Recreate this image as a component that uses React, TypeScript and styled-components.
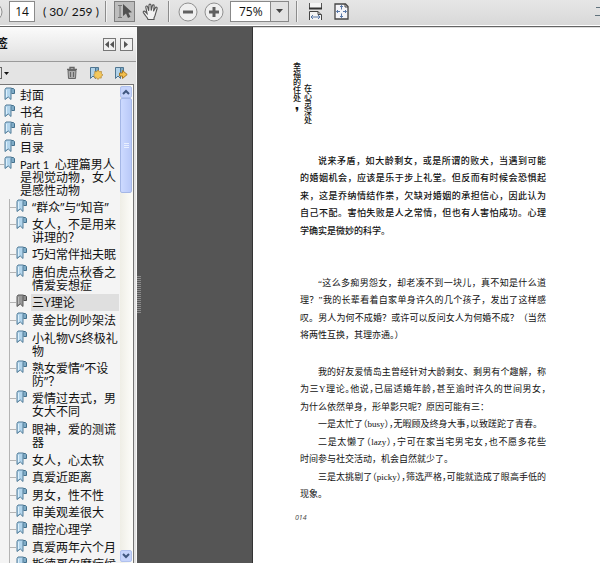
import React from "react";
import styled, { createGlobalStyle, css } from "styled-components";

const GlobalStyle = createGlobalStyle`
  * { box-sizing: border-box; }
  body { margin: 0; overflow: hidden; }
  button, input, select { font: inherit; color: inherit; margin: 0; padding: 0; border: 0; background: none; border-radius: 0; }
  ul { list-style: none; margin: 0; padding: 0; }
  p { margin: 0; }
  svg { display: block; flex: none; }
`;

const Shell = styled.div`
  display: flex;
  flex-direction: column;
  height: 100vh;
  background: #fff;
  color: #111;
  font-family: "Open Sans", "Noto Sans CJK SC", sans-serif;
  font-size: 12px;
`;

const Toolbar = styled.header`
  display: flex;
  align-items: flex-start;
  flex: none;
  height: 27px;
  overflow: hidden;
  background: linear-gradient(#e6e6e6, #d8d8d8);
  border-bottom: 1px solid #646464;
  box-shadow: inset 0 -1px #fff;
`;

const ToolButton = styled.button<{ $active?: boolean; $gap?: number }>`
  display: grid;
  place-items: center;
  flex: none;
  width: 21px;
  height: 21px;
  margin: 1px 0 0 ${(p) => p.$gap ?? 0}px;
  ${(p) =>
    p.$active &&
    css`
      background: #bdbdbd;
      border: 1px solid #7e7e7e;
    `}
`;

const EdgeButton = styled.button<{ $width: number }>`
  display: flex;
  justify-content: flex-end;
  flex: none;
  width: ${(p) => p.$width}px;
  height: 20px;
  margin-top: 2px;
  overflow: hidden;
`;

const PageInput = styled.input`
  flex: none;
  width: 26px;
  height: 21px;
  margin: 1px 0 0 6px;
  background: #fff;
  border: 1px solid #8a8a8a;
  text-align: center;
`;

const PageCount = styled.span`
  flex: none;
  width: 62px;
  margin-left: 8px;
  font-family: Lato, sans-serif;
  line-height: 23px;
  white-space: pre;
`;

const Separator = styled.span<{ $before?: number; $after: number }>`
  flex: none;
  width: 2px;
  height: 21px;
  margin: 1px ${(p) => p.$after}px 0 ${(p) => p.$before ?? 0}px;
  background: #8c8c8c;
  border-right: 1px solid #f2f2f2;
`;

const Zoom = styled.div`
  position: relative;
  display: flex;
  flex: none;
  width: 59px;
  height: 21px;
  margin: 1px 7px 0 6px;
`;

const ZoomSelect = styled.select`
  appearance: none;
  width: 100%;
  padding: 0 19px 0 8px;
  background: linear-gradient(90deg, #fff 39px, #888 39px, #888 40px, #e2e2e2 40px);
  border: 1px solid #888;
`;

const ZoomArrow = styled.svg`
  position: absolute;
  right: 6px;
  top: 8px;
  pointer-events: none;
`;

const Spacer = styled.span`
  flex: 1;
`;

const Body = styled.div`
  display: flex;
  flex: 1;
  min-height: 0;
`;

const Sidebar = styled.aside`
  display: flex;
  flex-direction: column;
  flex: none;
  width: 137px;
  background: #e4e4e4;
  border-right: 1px solid #f8f8f8;
`;

const PanelHeader = styled.div`
  display: flex;
  align-items: center;
  flex: none;
  height: 35px;
  padding-right: 3px;
  background: linear-gradient(#fbfbfb, #dfdfdf);
  border-bottom: 1px solid #9a9a9a;
`;

const PanelTitle = styled.h2`
  display: flex;
  justify-content: flex-end;
  flex: none;
  width: 8px;
  margin: 0 auto 0 0;
  overflow: hidden;
  white-space: nowrap;
  font-size: 12px;
  line-height: 16px;
  font-weight: 700;
`;

const PanelButton = styled.button`
  display: grid;
  place-items: center;
  width: 13px;
  height: 13px;
  margin-left: 4px;
  background: #f0f0f0;
  border: 1px solid #777;
`;

const PanelTools = styled.div`
  display: flex;
  align-items: center;
  flex: none;
  gap: 11px;
  height: 22px;
  padding-right: 8px;
`;

const OptionsButton = styled.button`
  display: flex;
  align-items: center;
  gap: 2px;
  margin-right: auto;
`;

const OptionsEdge = styled.span`
  width: 2px;
  height: 12px;
  border: 1px solid #666;
  border-left: 0;
`;

const ListFrame = styled.div`
  display: flex;
  flex: 1;
  min-height: 0;
  margin-right: 2px;
  overflow: hidden;
  background: #f4f4f4;
  border-top: 1px solid #777;
  border-right: 1px solid #777;
`;

const Tree = styled.nav`
  flex: 1;
  min-width: 0;
  overflow: hidden;
  padding: 2px 1px 0 0;
`;

const ChildList = styled.ul`
  margin-left: 9px;
  border-left: 1px solid #b4b4b4;
`;

const Entry = styled.button<{ $indent?: boolean }>`
  display: flex;
  align-items: flex-start;
  width: 100%;
  min-height: 17px;
  padding-left: ${(p) => (p.$indent ? 4 : 0)}px;
  text-align: left;
`;

const Item = styled.li`
  &:nth-child(3n),
  &:nth-child(5n) {
    padding-bottom: 1px;
  }
`;

const Branch = styled.span<{ $wide?: boolean }>`
  flex: none;
  width: ${(p) => (p.$wide ? 6 : 4)}px;
  height: 1px;
  margin-top: 8px;
  background: #b4b4b4;
`;

const Label = styled.span<{ $selected?: boolean }>`
  flex: 1;
  margin-left: 4px;
  padding: 2px 0 2px 1px;
  line-height: 13px;
  white-space: pre;
  background: ${(p) => (p.$selected ? "#dfdfdf" : "transparent")};
`;

const PartNumber = styled.span`
  font-family: Lato, sans-serif;
  font-size: 11px;
`;

const Scrollbar = styled.div`
  display: flex;
  flex-direction: column;
  flex: none;
  width: 13px;
  padding: 1px 0;
  background: linear-gradient(90deg, #efeee6, #fdfdfa);
`;

const ScrollButton = styled.button`
  display: grid;
  place-items: center;
  flex: none;
  width: 12px;
  height: 12px;
  background: #c6d4fb;
  border: 1px solid #b0c1ee;
  border-radius: 2px;
`;

const ScrollTrack = styled.div`
  flex: 1;
`;

const ScrollThumb = styled.div`
  display: grid;
  place-items: center;
  width: 12px;
  height: 95px;
  background: linear-gradient(90deg, #cddaff, #b9c9f8);
  border: 1px solid #a5b7e6;
  border-radius: 2px;
`;

const Gutter = styled.div`
  display: flex;
  align-items: center;
  flex: none;
  width: 116px;
  background: #555;
  border-right: 1px solid #333;
`;

const Grip = styled.span`
  width: 4px;
  height: 38px;
  background: repeating-linear-gradient(#8b8b8b 0 1px, #555 1px 2px);
`;

const Page = styled.main`
  flex: 1;
  min-width: 0;
  overflow: hidden;
  padding: 35px 54px 0 47px;
  background: #fff;
  border-top: 1px solid #ddd;
  font-family: "Liberation Serif", "Noto Sans CJK SC", serif;
  font-size: 9px;
  line-height: 18px;
`;

const VerticalTitle = styled.h1`
  display: flex;
  gap: 1px;
  height: 89px;
  margin: 0 0 0 -8px;
  font-size: 8px;
  line-height: 8px;
  font-weight: 500;
`;

const TitleColumn = styled.span<{ $low?: boolean }>`
  display: flex;
  flex-direction: column;
  align-items: center;
  width: 10px;
  padding-top: ${(p) => (p.$low ? 22 : 0)}px;
`;

const BigComma = styled.span`
  font-family: "DejaVu Sans", sans-serif;
  font-size: 14px;
  line-height: 18px;
`;

const Passage = styled.section<{ $bold?: boolean; $space: number }>`
  margin-bottom: ${(p) => p.$space}px;
  font-weight: ${(p) => (p.$bold ? 500 : 400)};
`;

const Line = styled.span<{ $indent?: boolean; $full?: boolean; $tight?: boolean }>`
  display: block;
  padding-left: ${(p) => (p.$indent ? 18 : 0)}px;
  white-space: nowrap;
  text-align: justify;
  text-align-last: ${(p) => (p.$full ? "justify" : "left")};
  font-feature-settings: ${(p) => (p.$tight ? '"halt"' : "normal")};
  &:nth-child(2n) {
    line-height: 17px;
  }
`;

const Folio = styled.footer`
  margin-left: -5px;
  color: #444;
  font: italic 7px/10px "Open Sans", sans-serif;
`;

const BookmarkIcon = ({ gray }: { gray?: boolean }) => (
  <svg width="11" height="14" viewBox="0 0 11 14">
    <path d="M4.5 1.5h4.8l1.2 1v4h-3" fill={gray ? "#8d8d8d" : "#7fabc6"} stroke={gray ? "#4b4b4b" : "#44708c"} />
    <path d="M1 2.5 2 1h5.5L7 2.5v10L4.3 10 1 12.5z" fill={gray ? "#999" : "#b3d5ec"} stroke={gray ? "#5b5b5b" : "#507b97"} />
    <path d="M2.5 3v7" stroke={gray ? "#bbb" : "#def1fc"} />
  </svg>
);

const RoundIcon = ({ plus }: { plus?: boolean }) => (
  <svg width="20" height="20" viewBox="0 0 20 20">
    <circle cx="10" cy="10" r="9" fill="#efefef" stroke="#909090" />
    <path d="M5 8.5h10v3H5z" fill="#606060" />
    {plus && <path d="M8.5 5h3v10h-3z" fill="#606060" />}
  </svg>
);

const SelectIcon = () => (
  <svg width="17" height="17" viewBox="0 0 17 17">
    <path d="M2 2.5h4M4 2.5v12M2 14.5h4" stroke="#777" fill="none" />
    <path d="M7 1v12l3-2.4 2 4.4 2.4-1.2-2-4.1 3.6-.5z" fill="#505050" />
  </svg>
);

const HandIcon = () => (
  <svg width="18" height="18" viewBox="0 0 18 18">
    <path
      d="M6 16.5c-.4-1.6-1.3-2.5-2.3-3.7L1.4 9.600c-.7-1.100.8-2 1.700-1.100l2 2L3.800 4.300c-.3-1.400 1.400-1.800 1.800-.5l1.100 4L7 2.200c0-1.500 1.900-1.500 2 0l.2 5.400 1.200-4.900c.3-1.300 2-1 1.800.4l-.7 5.200 1.900-3.600c.6-1.100 2.100-.5 1.700.8l-1.600 5.400c-.4 2-.6 2.800-1.500 3.900v1.700z"
      fill="#f2f2f2"
      stroke="#555"
      strokeWidth="1.1"
    />
  </svg>
);

const FitWidthIcon = () => (
  <svg width="15" height="17" viewBox="0 0 15 17">
    <path d="M1.5 0v5.5h12V0" fill="#f4f4f4" />
    <path d="M1.5 0v5M13.5 0v5" stroke="#555" />
    <path d="M1 5.500h13" stroke="#333" strokeWidth="2" />
    <path d="M1.500 17V8.500h8.500l3.500 3.500v5" fill="#f4f4f4" stroke="#444" />
    <path d="M10 8.500v3h3.500" fill="none" stroke="#444" />
    <path d="M3 14h9M5 12l-2 2 2 2M10 12l2 2-2 2" fill="none" stroke="#5878a8" />
  </svg>
);

const FitPageIcon = () => (
  <svg width="15" height="17" viewBox="0 0 15 17">
    <path d="M1 1h10.5L14 3.5V16H1z" fill="#f4f4f8" stroke="#444" strokeWidth="1.3" />
    <path d="M7.500 2.500v4M7.500 10.500v4M2.500 8.500h3.500M9 8.500h3.500" stroke="#5878a8" />
    <path d="m6 4 1.500-1.500L9 4M6 13l1.500 1.500L9 13M4 7 2.500 8.500 4 10M11 7l1.500 1.500L11 10" fill="none" stroke="#5878a8" />
    <path d="M11 1v3h3" fill="none" stroke="#444" />
  </svg>
);

const TrashIcon = () => (
  <svg width="12" height="14" viewBox="0 0 12 14">
    <path d="M1 3.500h10M4 3V1.500h4V3" fill="none" stroke="#666" strokeWidth="1.4" />
    <path d="M2 4.500h8l-.5 8h-7z" fill="#aaa" stroke="#666" />
    <path d="M4.500 6v5M7.500 6v5" stroke="#666" />
  </svg>
);

const MarkActionIcon = ({ arrow }: { arrow?: boolean }) => (
  <svg width="14" height="14" viewBox="0 0 14 14">
    <path d="M4 1.500h5.500v6H5" fill="#7da9c4" stroke="#4f7590" />
    <path d="M1.500 1.500h5v11L4 10l-2.500 2.500z" fill="#b1d2e8" stroke="#4f7590" />
    {arrow ? (
      <path d="M5.500 7h3V4.500l4.700 4-4.700 4V10h-3z" fill="#f4bf4b" stroke="#a87822" />
    ) : (
      <path d="m9 4 1.300 1.700 2.200-.2-.2 2.100L14 9l-1.800 1.100.1 2-2-.2L9 13.500l-1.300-1.600-2 .2.1-2L4.500 9l1.400-1.300-.2-2.200 2.100.2z" fill="#f4c85c" stroke="#b18735" strokeWidth=".7" />
    )}
  </svg>
);

const Chevron = ({ down }: { down?: boolean }) => (
  <svg width="8" height="6" viewBox="0 0 8 6">
    <path d={down ? "m1 1 3 3 3-3" : "m1 5 3-3 3 3"} fill="none" stroke="#40577f" strokeWidth="2" />
  </svg>
);

const topEntries = ["封面", "书名", "前言", "目录"];

const childEntries = [
  "“群众”与“知音”",
  "女人，不是用来\n讲理的？",
  "巧妇常伴拙夫眠",
  "唐伯虎点秋香之\n情爱妄想症",
  "三Y理论",
  "黄金比例吵架法",
  "小礼物VS终极礼\n物",
  "熟女爱情“不设\n防”？",
  "爱情过去式，男\n女大不同",
  "眼神，爱的测谎\n器",
  "女人，心太软",
  "真爱近距离",
  "男女，性不性",
  "审美观差很大",
  "醋控心理学",
  "真爱两年六个月",
  "斯德哥尔摩症候",
];

type TextLine = { text: string; indent?: boolean; full?: boolean; tight?: boolean };

const intro: TextLine[] = [
  { text: "说来矛盾，如大龄剩女，或是所谓的败犬，当遇到可能", indent: true, full: true },
  { text: "的婚姻机会，应该是乐于步上礼堂。但反而有时候会恐惧起", full: true },
  { text: "来，这是乔纳情结作祟，欠缺对婚姻的承担信心，因此认为", full: true },
  { text: "自己不配。害怕失败是人之常情，但也有人害怕成功。心理", full: true },
  { text: "学确实是微妙的科学。" },
];

const question: TextLine[] = [
  { text: "“这么多痴男怨女，却老凑不到一块儿，真不知是什么道", indent: true, full: true },
  { text: "理？”我的长辈看着自家单身许久的几个孩子，发出了这样感", full: true },
  { text: "叹。男人为何不成婚？或许可以反问女人为何婚不成？（当然", full: true },
  { text: "将两性互换，其理亦通。）" },
];

const theory: TextLine[] = [
  { text: "我的好友爱情岛主曾经针对大龄剩女、剩男有个趣解，称", indent: true, full: true },
  { text: "为三Y理论。他说，已届适婚年龄，甚至逾时许久的世间男女，", full: true, tight: true },
  { text: "为什么依然单身，形单影只呢？原因可能有三：" },
  { text: "一是太忙了（busy），无暇顾及终身大事，以致蹉跎了青春。", indent: true, tight: true },
  { text: "二是太懒了（lazy），宁可在家当宅男宅女，也不愿多花些", indent: true, full: true, tight: true },
  { text: "时间参与社交活动，机会自然就少了。" },
  { text: "三是太挑剔了（picky），筛选严格，可能就造成了眼高手低的", indent: true, full: true, tight: true },
  { text: "现象。" },
];

const Lines = ({ lines }: { lines: TextLine[] }) => (
  <p>
    {lines.map((line) => (
      <Line key={line.text} $indent={line.indent} $full={line.full} $tight={line.tight}>
        {line.text}
      </Line>
    ))}
  </p>
);

const stack = (text: string) => text.split("").map((c) => <span key={c}>{c}</span>);

export default function App() {
  return (
    <Shell>
      <GlobalStyle />
      <Toolbar>
        <EdgeButton $width={3} aria-label="Next page">
          <RoundIcon />
        </EdgeButton>
        <PageInput aria-label="Page" defaultValue="14" />
        <PageCount>{"( 30/ 259 )"}</PageCount>
        <Separator $after={7} />
        <ToolButton $active aria-label="Select">
          <SelectIcon />
        </ToolButton>
        <ToolButton $gap={5} aria-label="Hand">
          <HandIcon />
        </ToolButton>
        <Separator $before={7} $after={7} />
        <ToolButton aria-label="Zoom out">
          <RoundIcon />
        </ToolButton>
        <ToolButton $gap={5} aria-label="Zoom in">
          <RoundIcon plus />
        </ToolButton>
        <Zoom>
          <ZoomSelect aria-label="Zoom level" defaultValue="75">
            <option value="75">75%</option>
            <option value="100">100%</option>
          </ZoomSelect>
          <ZoomArrow width="7" height="5" viewBox="0 0 7 5">
            <path d="M0 0h7L3.500 4z" fill="#444" />
          </ZoomArrow>
        </Zoom>
        <Separator $after={7} />
        <ToolButton aria-label="Fit width">
          <FitWidthIcon />
        </ToolButton>
        <ToolButton $gap={5} aria-label="Fit page">
          <FitPageIcon />
        </ToolButton>
        <Spacer />
        <EdgeButton $width={5} aria-label="More tools">
          <svg width="5" height="17" viewBox="0 0 5 17">
            <path d="M1 5.500h4M0 13.500h5" stroke="#61727c" />
          </svg>
        </EdgeButton>
      </Toolbar>
      <Body>
        <Sidebar>
          <PanelHeader>
            <PanelTitle>签</PanelTitle>
            <PanelButton aria-label="Collapse">
              <svg width="9" height="7" viewBox="0 0 9 7">
                <path d="M4 0v7L0 3.500zM9 0v7L5 3.500z" fill="#555" />
              </svg>
            </PanelButton>
            <PanelButton aria-label="Expand">
              <svg width="5" height="7" viewBox="0 0 5 7">
                <path d="M0 0v7l4-3.500z" fill="#555" />
              </svg>
            </PanelButton>
          </PanelHeader>
          <PanelTools>
            <OptionsButton aria-label="Options">
              <OptionsEdge />
              <svg width="5" height="3" viewBox="0 0 5 3">
                <path d="M0 0h5L2.500 3z" fill="#111" />
              </svg>
            </OptionsButton>
            <button aria-label="Delete">
              <TrashIcon />
            </button>
            <button aria-label="New bookmark">
              <MarkActionIcon />
            </button>
            <button aria-label="Go to bookmark">
              <MarkActionIcon arrow />
            </button>
          </PanelTools>
          <ListFrame>
            <Tree aria-label="书签">
              <ul>
                {topEntries.map((text) => (
                  <Item key={text}>
                    <Entry $indent>
                      <BookmarkIcon />
                      <Label>{text}</Label>
                    </Entry>
                  </Item>
                ))}
                <Item>
                  <Entry>
                    <Branch />
                    <BookmarkIcon />
                    <Label>
                      <PartNumber>{"Part 1  "}</PartNumber>
                      {"心理篇男人\n是视觉动物，女人\n是感性动物"}
                    </Label>
                  </Entry>
                  <ChildList>
                    {childEntries.map((text) => {
                      const selected = text === "三Y理论";
                      return (
                        <Item key={text}>
                          <Entry aria-current={selected || undefined}>
                            <Branch $wide />
                            <BookmarkIcon gray={selected} />
                            <Label $selected={selected}>{text}</Label>
                          </Entry>
                        </Item>
                      );
                    })}
                  </ChildList>
                </Item>
              </ul>
            </Tree>
            <Scrollbar>
              <ScrollButton aria-label="Scroll up">
                <Chevron />
              </ScrollButton>
              <ScrollTrack>
                <ScrollThumb>
                  <svg width="5" height="6" viewBox="0 0 5 6">
                    <path d="M0 .5h5M0 2.500h5M0 4.500h5" stroke="#e9f0ff" />
                  </svg>
                </ScrollThumb>
              </ScrollTrack>
              <ScrollButton aria-label="Scroll down">
                <Chevron down />
              </ScrollButton>
            </Scrollbar>
          </ListFrame>
        </Sidebar>
        <Gutter>
          <Grip />
        </Gutter>
        <Page>
          <VerticalTitle>
            <TitleColumn>
              {stack("幸福的住处")}
              <BigComma>❜</BigComma>
            </TitleColumn>
            <TitleColumn $low>{stack("在心灵深处")}</TitleColumn>
          </VerticalTitle>
          <Passage $bold $space={34}>
            <Lines lines={intro} />
          </Passage>
          <Passage $space={19}>
            <Lines lines={question} />
          </Passage>
          <Passage $space={10}>
            <Lines lines={theory} />
          </Passage>
          <Folio>014</Folio>
        </Page>
      </Body>
    </Shell>
  );
}
